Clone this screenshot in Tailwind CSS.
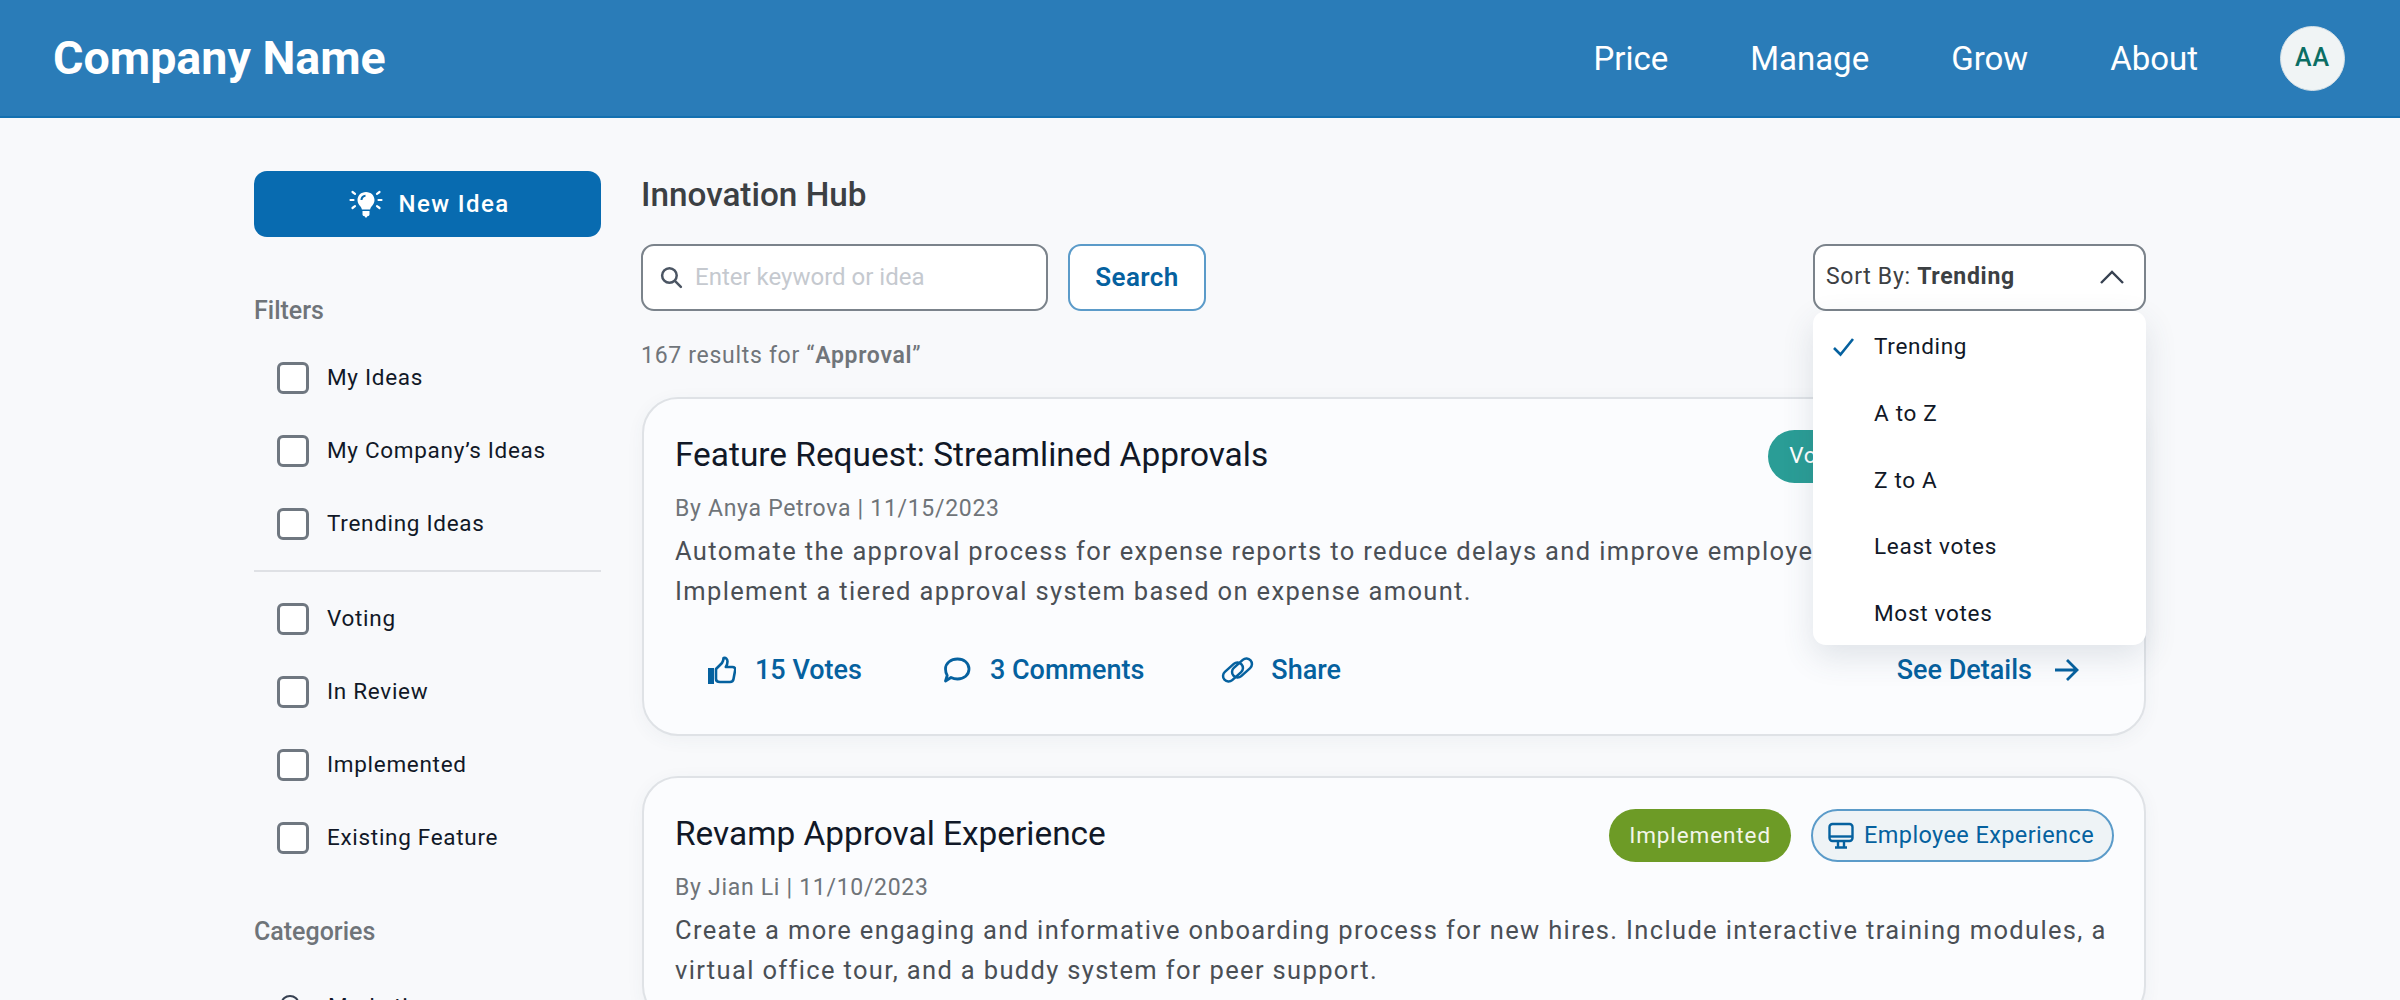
<!DOCTYPE html>
<html lang="en">
<head>
    <meta charset="UTF-8">
    <title>Innovation Hub</title>
    <script src="https://cdn.jsdelivr.net/npm/@tailwindcss/browser@4"></script>
</head>
<body class="h-[1000px] overflow-hidden bg-[#f8f9fb] font-[Roboto,sans-serif]">
    <!-- Header -->
    <header class="h-[118px] bg-[#2a7cb8] border-b-2 border-[#1470b0] flex items-center justify-between pl-[53px] pr-[55px]">
        <h1 class="pt-[2px] text-white text-[46.6px] font-bold">Company Name</h1>
        <nav class="flex items-center text-white text-[33px]">
            <a class="pt-[2px] mr-[82px]">Price</a>
            <a class="pt-[2px] mr-[82px]">Manage</a>
            <a class="pt-[2px] mr-[82px]">Grow</a>
            <a class="pt-[2px] mr-[82px]">About</a>
            <div class="w-[65px] h-[65px] rounded-full bg-[#f0f4f5] border border-[#d5e0e6] flex items-center justify-center text-[#0b6e64] text-[25px] tracking-[0.8px] font-medium">AA</div>
        </nav>
    </header>

    <div class="w-[1892px] mx-auto flex items-start gap-[40px] pt-[53px]">
        <!-- Sidebar -->
        <aside class="w-[347px] shrink-0">
            <button class="w-full h-[66px] pl-[3px] rounded-[13px] bg-[#086bb0] text-white text-[24px] font-medium tracking-[1.4px] flex items-center justify-center gap-[16px]">
                <svg class="w-[34px] h-[32px]" viewBox="0 0 34 32">
                    <path fill="#fff" d="M17 4c-5 0-8.500 3.600-8.500 8 0 3 1.500 4.800 3 6.500.8 1 1.200 2 1.400 3h8.200c.2-1 .6-2 1.400-3 1.500-1.700 3-3.500 3-6.500 0-4.400-3.500-8-8.500-8z"/>
                    <path fill="#086bb0" d="M11.500 12c0-3 2.200-5 5-5.200v2c-1.700.2-3 1.500-3 3.200z"/>
                    <path fill="#fff" d="M13.500 23h7v3.500c0 .8-.7 1.500-1.500 1.500h-.5c-.3 1-.8 1.500-1.500 1.500s-1.200-.5-1.500-1.500H15c-.8 0-1.500-.7-1.500-1.500z"/>
                    <path stroke="#fff" stroke-width="2.200" stroke-linecap="round" d="M1.500 12h3M29.500 12h3M3.500 4l2.500 1.800M30.500 4L28 5.800M3.500 20l2.500-1.800M30.500 20L28 18.200"/>
                </svg>
                New Idea
            </button>

            <h3 class="mt-[58.500px] text-[25px] font-medium text-[#6f7479] leading-[30px]">Filters</h3>
            <div class="mt-[36.500px] pl-[23px] flex flex-col gap-[41px] text-[22.500px] tracking-[0.7px] text-[#111827]">
                <label class="flex items-center gap-[18px] h-[32px]"><span class="w-[32px] h-[32px] rounded-[6px] border-[3px] border-[#6f7780] bg-white"></span>My Ideas</label>
                <label class="flex items-center gap-[18px] h-[32px]"><span class="w-[32px] h-[32px] rounded-[6px] border-[3px] border-[#6f7780] bg-white"></span>My Company’s Ideas</label>
                <label class="flex items-center gap-[18px] h-[32px]"><span class="w-[32px] h-[32px] rounded-[6px] border-[3px] border-[#6f7780] bg-white"></span>Trending Ideas</label>
            </div>
            <hr class="mt-[30px] border-t-2 border-[#dfe1e5]">
            <div class="mt-[31px] pl-[23px] flex flex-col gap-[41px] text-[22.500px] tracking-[0.7px] text-[#111827]">
                <label class="flex items-center gap-[18px] h-[32px]"><span class="w-[32px] h-[32px] rounded-[6px] border-[3px] border-[#6f7780] bg-white"></span>Voting</label>
                <label class="flex items-center gap-[18px] h-[32px]"><span class="w-[32px] h-[32px] rounded-[6px] border-[3px] border-[#6f7780] bg-white"></span>In Review</label>
                <label class="flex items-center gap-[18px] h-[32px]"><span class="w-[32px] h-[32px] rounded-[6px] border-[3px] border-[#6f7780] bg-white"></span>Implemented</label>
                <label class="flex items-center gap-[18px] h-[32px]"><span class="w-[32px] h-[32px] rounded-[6px] border-[3px] border-[#6f7780] bg-white"></span>Existing Feature</label>
            </div>

            <h3 class="mt-[62.500px] text-[25px] font-medium text-[#6f7479] leading-[30px]">Categories</h3>
            <div class="mt-[43px] pl-[24px] flex items-center gap-[26px] text-[22.500px] tracking-[0.7px] text-[#111827]">
                <svg class="w-[24px] h-[24px]" viewBox="0 0 24 24" fill="none" stroke="#374151" stroke-width="2.200"><path d="M4 9c0-4 3.500-7 8-7s8 3 8 7-3.500 7-8 7-8-3-8-7z"/></svg>
                Marketing
            </div>
        </aside>

        <!-- Main column -->
        <main class="flex-1 min-w-0">
            <h2 class="text-[33.300px] font-medium text-[#3c4043] leading-[48px]">Innovation Hub</h2>

            <div class="mt-[24.500px] flex items-center justify-between">
                <div class="flex items-center gap-[20px]">
                    <div class="w-[407px] h-[67px] rounded-[13px] border-2 border-[#7b838b] bg-white flex items-center pl-[16px] gap-[11px]">
                        <svg class="w-[25px] h-[25px]" viewBox="0 0 24 24" fill="none" stroke="#4b5563" stroke-width="2.400" stroke-linecap="round"><circle cx="10" cy="10" r="7"/><path d="M15.500 15.500L21 21"/></svg>
                        <span class="text-[24px] text-[#c5c9cf]">Enter keyword or idea</span>
                    </div>
                    <button class="w-[138px] h-[67px] rounded-[13px] border-2 border-[#5b9bc9] bg-white text-[#05619f] text-[26px] tracking-[0.4px] font-semibold">Search</button>
                </div>
                <div class="w-[333px] h-[67px] rounded-[13px] border-2 border-[#7b838b] bg-white flex items-center justify-between pl-[11px] pr-[19px] text-[23px] tracking-[0.7px] text-[#3c4043]">
                    <span>Sort By: <b class="font-bold">Trending</b></span>
                    <svg class="w-[26px] h-[16px]" viewBox="0 0 26 16" fill="none" stroke="#374151" stroke-width="2.400"><path d="M2 14L13 3l11 11"/></svg>
                </div>
            </div>

            <p class="mt-[31px] text-[23px] tracking-[0.7px] text-[#70757a] leading-[28px]">167 results for “<b class="font-semibold">Approval</b>”</p>

            <div class="relative ml-[1px]">
                <!-- Sort dropdown -->
                <div class="absolute z-10 right-0 top-[-85.500px] w-[333px] h-[334px] rounded-[13px] bg-white shadow-[0_12px_32px_rgba(60,80,100,0.14)] flex flex-col justify-between pt-[21px] pb-[16px] text-[22.500px] tracking-[0.7px] text-[#111827]">
                    <div class="h-[30px] flex items-center pl-[19px]">
                        <svg class="w-[24px] h-[20px] mr-[18px]" viewBox="0 0 24 20" fill="none" stroke="#05619f" stroke-width="2.600"><path d="M2 11l6.500 6.500L21 2"/></svg>
                        Trending
                    </div>
                    <div class="h-[30px] flex items-center pl-[61px]">A to Z</div>
                    <div class="h-[30px] flex items-center pl-[61px]">Z to A</div>
                    <div class="h-[30px] flex items-center pl-[61px]">Least votes</div>
                    <div class="h-[30px] flex items-center pl-[61px]">Most votes</div>
                </div>

                <!-- Cards -->
                <article class="mt-[27px] h-[339px] rounded-[36px] border-2 border-[#dfe2e6] bg-[#fbfcfe] shadow-[0_4px_18px_rgba(60,70,90,0.05)] pl-[31px] pr-[30px] pt-[30px]">
                    <div class="flex items-start justify-between">
                        <h3 class="text-[33.400px] text-[#111827] leading-[52px]">Feature Request: Streamlined Approvals</h3>
                        <div class="mt-[1px] flex items-center gap-[20px]">
                            <span class="h-[53px] px-[21px] rounded-full bg-[#2a9d96] text-white text-[22.500px] tracking-[0.7px] flex items-center">Voting</span>
                            <span class="w-[215px] h-[53px] px-[20px] rounded-full border-2 border-[#5b9bc9] text-[#05619f] text-[22.500px] flex items-center">Operations</span>
                        </div>
                    </div>
                    <p class="mt-[12px] text-[23px] tracking-[0.7px] text-[#6f7479] leading-[28px]">By Anya Petrova | 11/15/2023</p>
                    <p class="mt-[8px] text-[25.500px] tracking-[1.350px] leading-[40px] text-[#4a4f55]">Automate the approval process for expense reports to reduce delays and improve employee satisfaction.<br>Implement a tiered approval system based on expense amount.</p>
                    <div class="mt-[40px] flex items-center justify-between text-[27px] font-medium text-[#05619f] leading-[38px]">
                        <div class="flex items-center">
                            <span class="flex items-center ml-[33px] gap-[19px]">
                                <svg class="w-[28px] h-[28px]" viewBox="0 0 28 28"><path fill="#05619f" d="M0 12h6v16H0z"/><path fill="none" stroke="#05619f" stroke-width="2.600" stroke-linejoin="round" d="M8 13l6-6c1-1.500 1.500-3 1.500-5 2.500-.5 4 1 4 3.500 0 2-.7 4-1.700 5.500h6.700c2 0 3 1.500 2.700 3l-1.700 9c-.3 2-1.700 3-3.500 3H12c-2 0-4-1-4-3z"/></svg>
                                15 Votes
                            </span>
                            <span class="flex items-center ml-[81px] gap-[19px]">
                                <svg class="w-[28px] h-[28px]" viewBox="0 0 28 28" fill="none" stroke="#05619f" stroke-width="2.800" stroke-linejoin="round"><path d="M14.500 3C21 3 26 7 26 13s-5 10-11.500 10c-2.500 0-4.500-.5-6.500-1.500L2.500 25l1.700-5.500C3 17.500 2.500 15.500 2.500 13 2.500 7 8 3 14.500 3z"/></svg>
                                3 Comments
                            </span>
                            <span class="flex items-center ml-[77px] gap-[17px]">
                                <svg class="w-[33px] h-[28px]" viewBox="0 0 33 28" fill="none" stroke="#05619f" stroke-width="2.500"><rect x="0.500" y="10.500" width="23" height="11" rx="5.500" transform="rotate(-42 12 16)"/><rect x="9.500" y="6.500" width="23" height="11" rx="5.500" transform="rotate(-42 21 12)"/></svg>
                                Share
                            </span>
                        </div>
                        <span class="flex items-center gap-[22px] mr-[35px]">
                            See Details
                            <svg class="w-[25px] h-[24px]" viewBox="0 0 25 24" fill="none" stroke="#05619f" stroke-width="2.800"><path d="M1 12h22M13 2l10 10-10 10"/></svg>
                        </span>
                    </div>
                </article>

                <article class="mt-[40.500px] rounded-[36px] border-2 border-[#dfe2e6] bg-[#fbfcfe] shadow-[0_4px_18px_rgba(60,70,90,0.05)] pl-[31px] pr-[30px] pt-[30px] pb-[30px]">
                    <div class="flex items-start justify-between">
                        <h3 class="text-[33.400px] text-[#111827] leading-[52px]">Revamp Approval Experience</h3>
                        <div class="mt-[1px] flex items-center gap-[20px]">
                            <span class="h-[53px] px-[20px] rounded-full bg-[#6d9b26] text-[#f3f6ea] text-[22.500px] tracking-[0.9px] flex items-center">Implemented</span>
                            <span class="h-[53px] pl-[15px] pr-[18px] rounded-full border-2 border-[#5b9bc9] bg-[#eef3f6] text-[#05619f] text-[23.500px] tracking-[0.4px] flex items-center gap-[10px]">
                                <svg class="w-[26px] h-[27px]" viewBox="0 0 26 27" fill="none" stroke="#05619f" stroke-width="2.400"><rect x="1.500" y="2" width="23" height="17" rx="3"/><path d="M1.500 14.500h23"/><path d="M10 20v5M16 20v5M7 25.500h12"/></svg>
                                Employee Experience
                            </span>
                        </div>
                    </div>
                    <p class="mt-[12px] text-[23px] tracking-[0.7px] text-[#6f7479] leading-[28px]">By Jian Li | 11/10/2023</p>
                    <p class="mt-[8px] text-[25.500px] tracking-[1.350px] leading-[40px] text-[#4a4f55]">Create a more engaging and informative onboarding process for new hires. Include interactive training modules, a<br>virtual office tour, and a buddy system for peer support.</p>
                </article>
            </div>
        </main>
    </div>
</body>
</html>
